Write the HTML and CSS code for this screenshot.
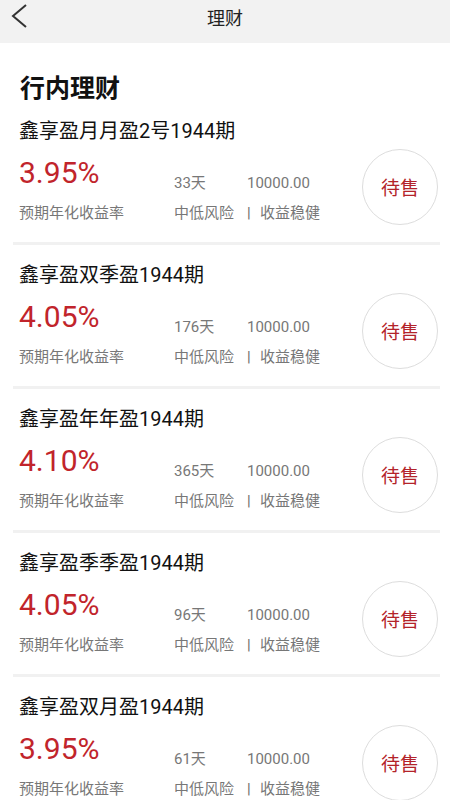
FILE: index.html
```html
<!DOCTYPE html>
<html lang="zh-CN">
<head>
    <meta charset="UTF-8">
    <meta name="viewport" content="width=device-width, initial-scale=1.0">
    <title>理财</title>
    <link rel="stylesheet" href="styles.css">
</head>
<body>
    <div class="top-bar">
        <svg class="back" width="20" height="26" viewBox="0 0 20 26">
            <path d="M16 2 L3 13 L16 24" fill="none" stroke="#333" stroke-width="2"/>
        </svg>
        <span class="top-title">理财</span>
    </div>

    <div class="finance-list">
        <h2>行内理财</h2>

        <div class="product">
            <div class="product-name">鑫享盈月月盈2号1944期</div>
            <div class="product-body">
                <div class="rate-col">
                    <div class="rate">3.95%</div>
                    <div class="rate-label">预期年化收益率</div>
                </div>
                <div class="info-col">
                    <div><span class="info-key">33天</span>10000.00</div>
                    <div><span class="info-key">中低风险</span><span class="pipe">|</span>收益稳健</div>
                </div>
                <div class="status">待售</div>
            </div>
        </div>

        <div class="product">
            <div class="product-name">鑫享盈双季盈1944期</div>
            <div class="product-body">
                <div class="rate-col">
                    <div class="rate">4.05%</div>
                    <div class="rate-label">预期年化收益率</div>
                </div>
                <div class="info-col">
                    <div><span class="info-key">176天</span>10000.00</div>
                    <div><span class="info-key">中低风险</span><span class="pipe">|</span>收益稳健</div>
                </div>
                <div class="status">待售</div>
            </div>
        </div>

        <div class="product">
            <div class="product-name">鑫享盈年年盈1944期</div>
            <div class="product-body">
                <div class="rate-col">
                    <div class="rate">4.10%</div>
                    <div class="rate-label">预期年化收益率</div>
                </div>
                <div class="info-col">
                    <div><span class="info-key">365天</span>10000.00</div>
                    <div><span class="info-key">中低风险</span><span class="pipe">|</span>收益稳健</div>
                </div>
                <div class="status">待售</div>
            </div>
        </div>

        <div class="product">
            <div class="product-name">鑫享盈季季盈1944期</div>
            <div class="product-body">
                <div class="rate-col">
                    <div class="rate">4.05%</div>
                    <div class="rate-label">预期年化收益率</div>
                </div>
                <div class="info-col">
                    <div><span class="info-key">96天</span>10000.00</div>
                    <div><span class="info-key">中低风险</span><span class="pipe">|</span>收益稳健</div>
                </div>
                <div class="status">待售</div>
            </div>
        </div>

        <div class="product">
            <div class="product-name">鑫享盈双月盈1944期</div>
            <div class="product-body">
                <div class="rate-col">
                    <div class="rate">3.95%</div>
                    <div class="rate-label">预期年化收益率</div>
                </div>
                <div class="info-col">
                    <div><span class="info-key">61天</span>10000.00</div>
                    <div><span class="info-key">中低风险</span><span class="pipe">|</span>收益稳健</div>
                </div>
                <div class="status">待售</div>
            </div>
        </div>
    </div>
</body>
</html>
```

FILE: styles.css
```css
body {
    font-family: Roboto, "Noto Sans CJK SC", sans-serif;
    margin: 0;
    background-color: #fff;
    color: #111;
    overflow: hidden;
}
.top-bar {
    height: 43px;
    background-color: #f2f2f2;
    position: relative;
    text-align: center;
}
.top-bar .back {
    position: absolute;
    left: 10px;
    top: 3px;
}
.top-title {
    display: inline-block;
    padding-top: 7px;
    font-size: 18px;
    line-height: 24px;
    color: #222;
}
.finance-list {
    padding: 0 10px 0 13px;
}
.finance-list h2 {
    margin: 0;
    padding: 34px 0 0 7px;
    font-size: 25px;
    line-height: 24px;
    font-weight: bold;
    color: #111;
}
.product {
    padding: 17px 0 19px 6px;
    border-bottom: 3px solid #f1f1f1;
}
.product-name {
    font-size: 20px;
    line-height: 26px;
    color: #111;
}
.product-body {
    display: flex;
    align-items: center;
    margin-top: 12px;
}
.rate-col {
    width: 155px;
}
.rate {
    font-size: 30px;
    line-height: 34px;
    color: #c1242b;
}
.rate-label {
    margin-top: 13px;
    font-size: 15px;
    line-height: 20px;
    color: #777;
}
.info-col {
    flex: 1;
    align-self: flex-end;
    display: flex;
    flex-direction: column;
    gap: 10px;
    font-size: 15px;
    line-height: 20px;
    color: #777;
}
.info-key {
    display: inline-block;
    width: 73px;
}
.pipe {
    display: inline-block;
    width: 13px;
    color: #666;
}
.status {
    width: 74px;
    height: 74px;
    margin: -8px 2px -2px 0;
    border: 1px solid #ddd;
    border-radius: 50%;
    display: flex;
    align-items: center;
    justify-content: center;
    font-size: 19px;
    color: #b3232a;
}
```
